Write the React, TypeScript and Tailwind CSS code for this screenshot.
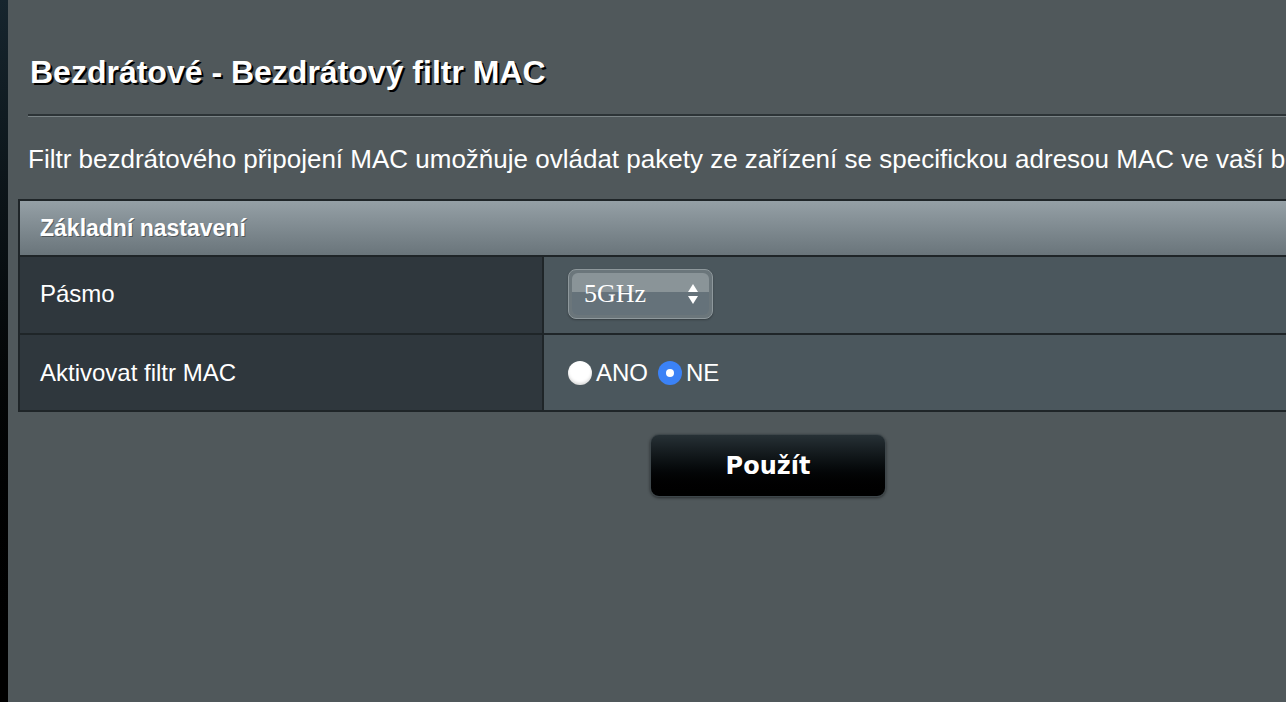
import React from 'react';

const Radio = ({ checked }: { checked: boolean }) =>
  checked ? (
    <span className="w-[24px] h-[24px] rounded-full bg-[#3b82f6] flex items-center justify-center shrink-0">
      <span className="w-[8px] h-[8px] rounded-full bg-white" />
    </span>
  ) : (
    <span className="w-[24px] h-[24px] rounded-full bg-white shrink-0 shadow-[inset_0_-2px_3px_rgba(0,0,0,0.15)]" />
  );

const App: React.FC = () => {
  return (
    <div className="flex w-[1286px] h-[702px] overflow-hidden bg-[#50585b] font-['Liberation_Sans',Arial,sans-serif] text-white">
      {/* left edge of the side menu */}
      <div className="w-[8px] shrink-0 bg-gradient-to-b from-[#16252e] via-[#050809] to-black" />

      <div className="flex-1 flex flex-col pl-[10px] overflow-hidden">
        <h1 className="mt-[52px] ml-[12px] text-[32px] font-bold leading-[40px] whitespace-nowrap [text-shadow:2px_2px_0_#000]">
          Bezdrátové - Bezdrátový filtr MAC
        </h1>

        {/* divider */}
        <div className="mt-[22px] ml-[10px] border-t-2 border-[#2c3336]">
          <div className="h-[1px] bg-[#7a8386]" />
        </div>

        <p className="mt-[26px] ml-[10px] text-[26px] leading-[32px] whitespace-nowrap">
          Filtr bezdrátového připojení MAC umožňuje ovládat pakety ze zařízení se specifickou adresou MAC ve vaší bezdrátové síti LAN.
        </p>

        {/* settings table */}
        <div className="mt-[24px] w-[1500px] shrink-0 border-2 border-[#1f2528] flex flex-col">
          <div className="h-[54px] flex items-center pl-[20px] bg-gradient-to-b from-[#95a0a6] to-[#6a757b] text-[23px] font-bold [text-shadow:1px_1px_0_rgba(0,0,0,0.35)]">
            Základní nastavení
          </div>

          <div className="flex h-[78px] border-t-2 border-[#1f2528]">
            <div className="w-[522px] shrink-0 bg-[#2f373d] flex items-center pl-[20px] text-[24px] pb-[2px]">
              Pásmo
            </div>
            <div className="flex-1 bg-[#4b575d] border-l-2 border-[#1f2528] flex items-center pl-[24px] pb-[2px]">
              <div className="w-[145px] h-[50px] rounded-[8px] border border-[#8e989c] bg-[#6b767b] p-[3px] shadow-[0_1px_2px_rgba(0,0,0,0.3)]">
                <div className="h-full rounded-[6px] bg-gradient-to-b from-[#8a9498] from-45% to-[#65727a] to-45% flex items-center pl-[12px] pr-[10px]">
                  <span className="font-['Liberation_Serif','Times_New_Roman',serif] text-[26px] leading-none">5GHz</span>
                  <svg className="ml-auto" width="12" height="24" viewBox="0 0 12 24">
                    <path d="M6 2 L11 10 L1 10 Z" fill="#fff" />
                    <path d="M1 14 L11 14 L6 22 Z" fill="#fff" />
                  </svg>
                </div>
              </div>
            </div>
          </div>

          <div className="flex h-[77px] border-t-2 border-[#1f2528]">
            <div className="w-[522px] shrink-0 bg-[#2f373d] flex items-center pl-[20px] text-[24px]">
              Aktivovat filtr MAC
            </div>
            <div className="flex-1 bg-[#4b575d] border-l-2 border-[#1f2528] flex items-center pl-[24px] text-[24px]">
              <Radio checked={false} />
              <span className="ml-[4px]">ANO</span>
              <span className="ml-[10px]"><Radio checked={true} /></span>
              <span className="ml-[4px]">NE</span>
            </div>
          </div>
        </div>

        {/* apply button */}
        <div className="w-[1500px] shrink-0 flex justify-center mt-[22px]">
          <button className="w-[236px] h-[63px] rounded-[9px] border border-[#3e474b] bg-gradient-to-b from-[#273136] to-[#000000] shadow-[0_1px_3px_rgba(0,0,0,0.5)] text-[24px] font-bold font-['DejaVu_Sans',Verdana,sans-serif] [text-shadow:1px_1px_0_#000]">
            Použít
          </button>
        </div>
      </div>
    </div>
  );
};

export default App;
